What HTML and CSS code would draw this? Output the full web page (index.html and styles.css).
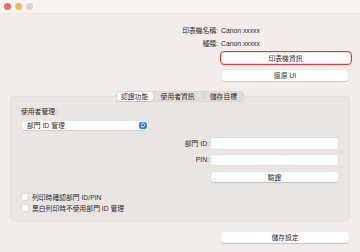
FILE: index.html
```html
<!DOCTYPE html>
<html lang="zh-Hant">
<head>
    <meta charset="UTF-8">
    <meta name="viewport" content="width=device-width, initial-scale=1.0">
    <title>印表機設定</title>
    <link rel="stylesheet" href="styles.css">
</head>
<body>

<div class="window">
    <div class="titlebar">
        <span class="dot dot-close"></span>
        <span class="dot dot-min"></span>
        <span class="dot dot-max"></span>
    </div>

    <div class="info">
        <div class="info-row">
            <span class="info-label">印表機名稱:</span>
            <span class="info-value">Canon xxxxx</span>
        </div>
        <div class="info-row second">
            <span class="info-label">種類:</span>
            <span class="info-value">Canon xxxxx</span>
        </div>
        <button class="btn btn-focus">印表機資訊</button>
        <button class="btn btn-restore">還原 UI</button>
    </div>

    <div class="tabs">
        <div class="segmented">
            <span class="seg seg-active">認證功能</span>
            <span class="seg seg-users">使用者資訊</span>
            <span class="seg-divider"></span>
            <span class="seg seg-target">儲存目標</span>
        </div>
    </div>

    <div class="group">
        <div class="group-label">使用者管理:</div>
        <div class="popup">
            <span>部門 ID 管理</span>
            <span class="stepper">
                <svg width="8" height="8" viewBox="0 0 8 8">
                    <path d="M2.4 3.2 L4 1.7 L5.6 3.2" fill="none" stroke="#fff" stroke-width="0.9" stroke-linecap="round" stroke-linejoin="round"/>
                    <path d="M2.4 4.8 L4 6.3 L5.6 4.8" fill="none" stroke="#fff" stroke-width="0.9" stroke-linecap="round" stroke-linejoin="round"/>
                </svg>
            </span>
        </div>

        <div class="form-row row-id">
            <label class="form-label">部門 ID:</label>
            <div class="field"></div>
        </div>
        <div class="form-row row-pin">
            <label class="form-label">PIN:</label>
            <div class="field"></div>
        </div>
        <div class="form-row row-verify">
            <span class="form-label"></span>
            <button class="btn btn-verify">驗證</button>
        </div>

        <div class="check-row first">
            <span class="checkbox"></span>
            <span>列印時確認部門 ID/PIN</span>
        </div>
        <div class="check-row">
            <span class="checkbox"></span>
            <span>黑白列印時不使用部門 ID 管理</span>
        </div>
    </div>

    <button class="btn btn-save">儲存設定</button>
</div>

</body>
</html>
```

FILE: styles.css
```css
body {
  margin: 0;
  font-family: "Liberation Sans", "Noto Sans CJK TC", sans-serif;
  font-size: 6.8px;
  color: #2e2c2c;
}

.window {
  width: 360px;
  height: 252px;
  background-color: #f2edeb;
  overflow: hidden;
}

.titlebar {
  height: 14px;
  background-color: #f7f3f0;
  border-bottom: 1px solid #ebe6e3;
  box-sizing: border-box;
  display: flex;
  align-items: center;
  gap: 4px;
  padding-left: 4px;
}

.dot {
  width: 7px;
  height: 7px;
  border-radius: 50%;
}

.dot-close { background-color: #ec6b60; }
.dot-min { background-color: #f2bd4f; }
.dot-max { background-color: #d8d4d2; }

.info {
  margin-top: 12px;
  display: flex;
  flex-direction: column;
}

.info-row {
  display: flex;
  height: 9px;
  line-height: 9px;
}

.info-row.second {
  margin-top: 3.5px;
}

.info-label {
  width: 218px;
  text-align: right;
}

.info-value {
  margin-left: 3px;
}

.btn {
  font-family: inherit;
  font-size: 6.8px;
  color: #2e2c2c;
  background-color: #fff;
  border: none;
  border-radius: 3px;
  padding: 0;
  box-shadow: 0 0.5px 1px rgba(0, 0, 0, 0.18);
  text-align: center;
}

.btn-focus {
  margin-top: 3px;
  margin-left: 219.5px;
  width: 132px;
  height: 14px;
  border: 1.3px solid #dc3a40;
  border-radius: 4px;
  box-shadow: inset 0 0 0 0.8px #f6c9cb;
}

.btn-restore {
  margin-top: 5px;
  margin-left: 222px;
  width: 126px;
  height: 11px;
}

.tabs {
  margin-top: 10px;
  display: flex;
  justify-content: center;
  position: relative;
  z-index: 1;
}

.segmented {
  display: flex;
  align-items: center;
  height: 11px;
  padding: 0 1px;
  background-color: #e2dedc;
  border-radius: 4px;
  box-shadow: inset 0 0 0 0.5px rgba(0, 0, 0, 0.06);
}

.seg {
  height: 9px;
  line-height: 9px;
  text-align: center;
}

.seg-active {
  width: 36px;
  background-color: #fff;
  border-radius: 3px;
  box-shadow: 0 0.5px 1px rgba(0, 0, 0, 0.2);
}

.seg-users {
  width: 50px;
}

.seg-divider {
  width: 0.8px;
  height: 6px;
  background-color: #c9c5c3;
}

.seg-target {
  width: 40px;
}

.group {
  margin: -5.5px 10px 0;
  height: 126px;
  box-sizing: border-box;
  padding: 11px 12px 0 11px;
  background-color: #e9e5e3;
  border-radius: 5px;
  box-shadow: inset 0 0 0 0.5px rgba(0, 0, 0, 0.05);
}

.group-label {
  height: 9px;
  line-height: 9px;
}

.popup {
  margin-top: 4.5px;
  margin-left: 1px;
  width: 126px;
  height: 9.5px;
  box-sizing: border-box;
  background-color: #fff;
  border-radius: 2.5px;
  box-shadow: 0 0.5px 1px rgba(0, 0, 0, 0.18);
  display: flex;
  align-items: center;
  justify-content: space-between;
  padding: 0 1px 0 5px;
}

.stepper {
  width: 8px;
  height: 7.5px;
  background-color: #3a7ff0;
  border-radius: 2px;
  display: flex;
  align-items: center;
  justify-content: center;
}

.form-row {
  display: flex;
  align-items: center;
}

.form-label {
  width: 188px;
  text-align: right;
  margin-right: 2px;
}

.field {
  width: 127px;
  background-color: #fff;
  box-shadow: 0 0 0 0.5px rgba(0, 0, 0, 0.08);
}

.row-id {
  margin-top: 7.5px;
}

.row-id .field {
  height: 11px;
}

.row-pin {
  margin-top: 6px;
}

.row-pin .field {
  height: 10.5px;
}

.row-verify {
  margin-top: 6.5px;
}

.btn-verify {
  width: 127px;
  height: 10px;
}

.check-row {
  display: flex;
  align-items: center;
  height: 9px;
  margin-top: 2px;
  margin-left: 0.5px;
}

.check-row.first {
  margin-top: 10.5px;
}

.checkbox {
  width: 6px;
  height: 6px;
  background-color: #fff;
  border-radius: 1.5px;
  box-shadow: 0 0 0 0.5px rgba(0, 0, 0, 0.12);
  margin-right: 4.5px;
}

.btn-save {
  margin-top: 10px;
  margin-left: 221px;
  width: 128px;
  height: 10.5px;
}
```
